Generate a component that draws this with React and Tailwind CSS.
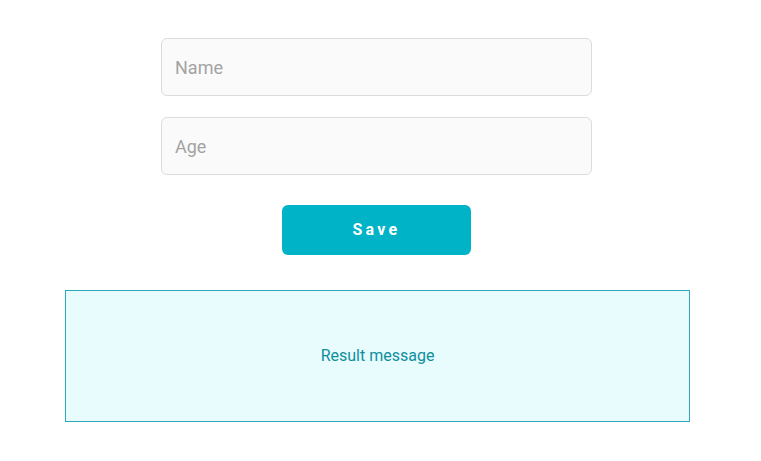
export default function App() {
  return (
    <div className="min-h-[461px] bg-white pt-[38px] font-['Roboto',sans-serif]">
      <div className="ml-[65px] flex w-[625px] flex-col items-center">
        <input
          type="text"
          placeholder="Name"
          className="mr-[2px] h-[58px] w-[431px] rounded-md border border-[#dcdcdc] bg-[#fafafa] px-[13px] text-[18px] text-gray-700 outline-none placeholder:text-[#a3a3a3]"
        />
        <input
          type="text"
          placeholder="Age"
          className="mr-[2px] mt-[21px] h-[58px] w-[431px] rounded-md border border-[#dcdcdc] bg-[#fafafa] px-[13px] text-[18px] text-gray-700 outline-none placeholder:text-[#a3a3a3]"
        />
        <button className="mr-[2px] mt-[30px] h-[50px] w-[189px] rounded-md bg-[#00b3c6] text-[16px] font-bold tracking-[3.3px] text-white">
          Save
        </button>
        <div className="mt-[35px] flex h-[132px] w-[625px] items-center justify-center border border-[#2aa8b5] bg-[#e8fcfe] text-[16px] text-[#0e8f9e]">
          Result message
        </div>
      </div>
    </div>
  );
}
